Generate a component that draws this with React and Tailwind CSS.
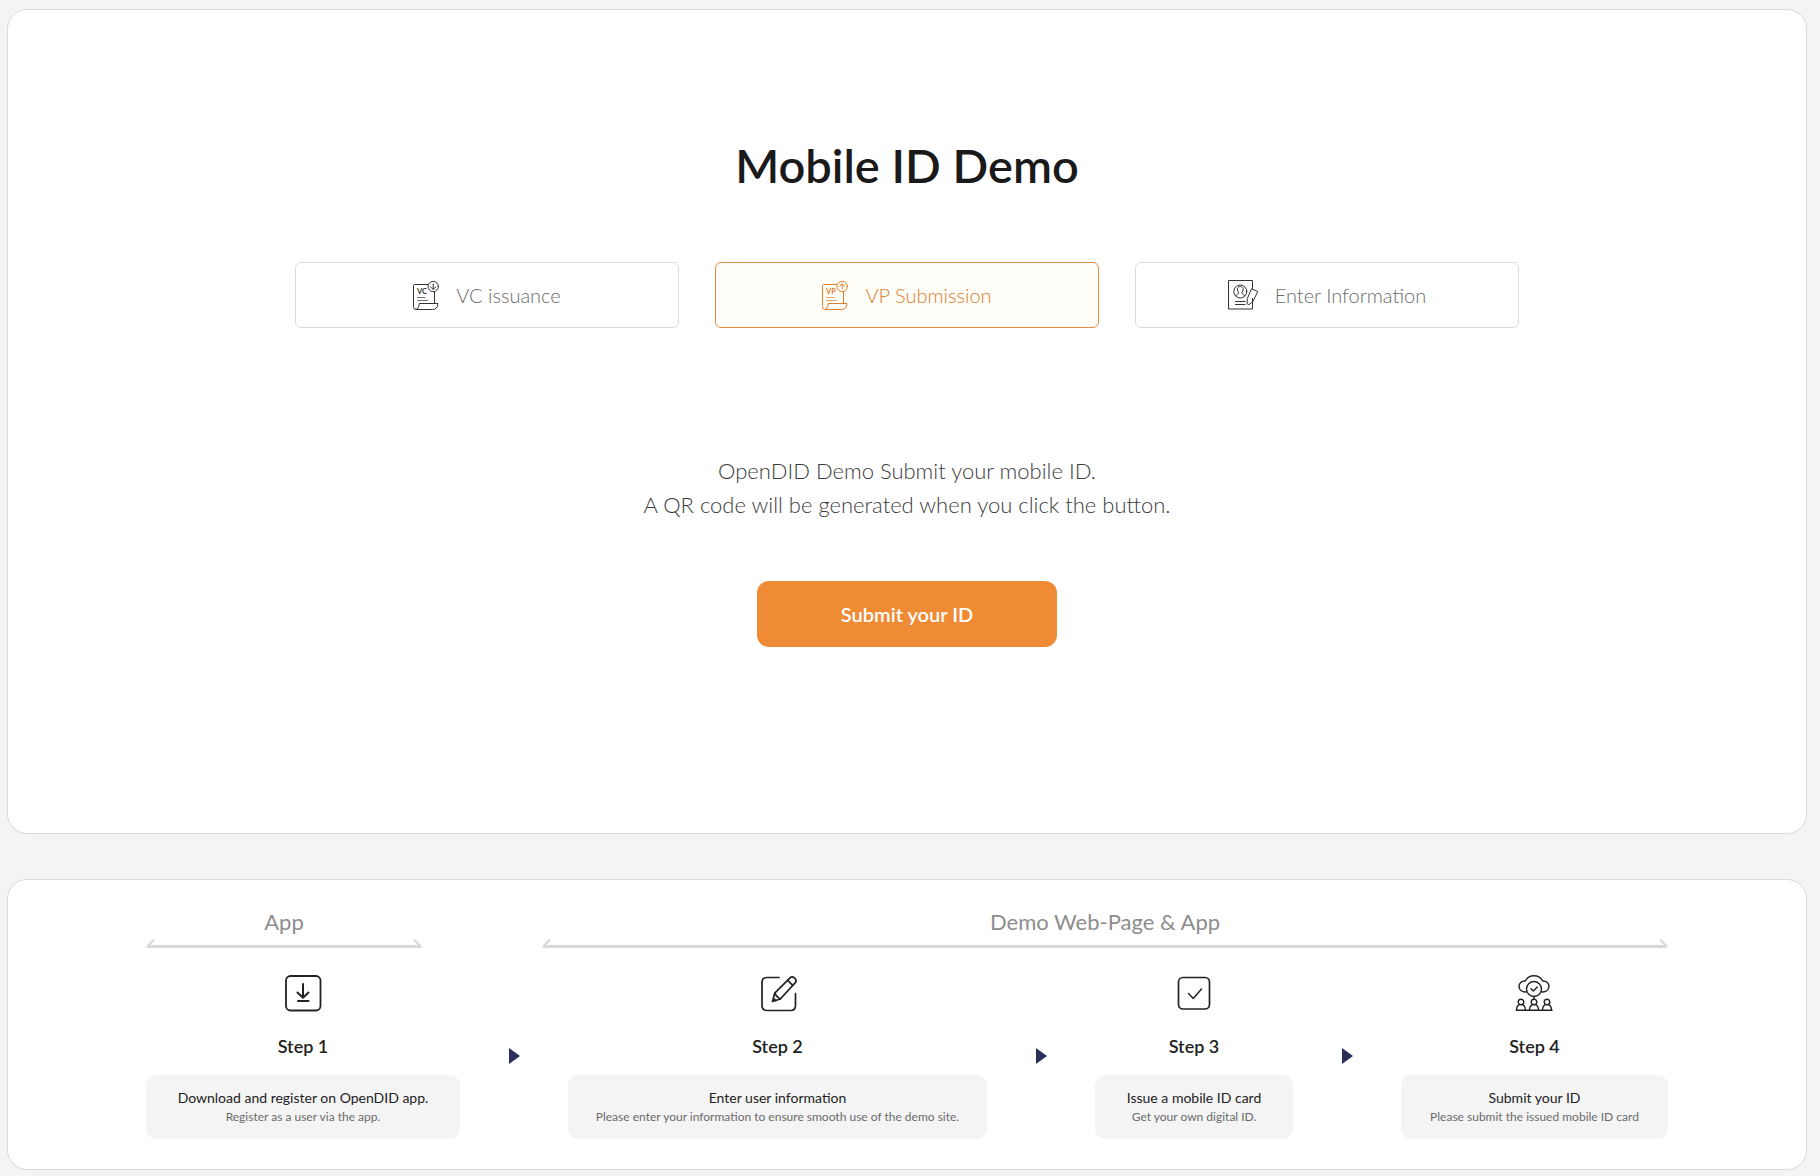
const iconProps = {
  fill: "none",
  stroke: "currentColor",
  strokeLinecap: "round",
  strokeLinejoin: "round",
  "aria-hidden": true,
};

function CertificateIcon({ letters, direction }) {
  return (
    <svg {...iconProps} viewBox="0 0 27 30" strokeWidth="1" className="h-[30px] w-[27px] shrink-0">
      <path d="M14.8 4.5H1.5q-1 0-1 1V26.5Q.5 29.5 3 29.5H19.5Q24.5 29.5 25 23.5H6.2Q6 29 3 29.5" />
      <path d="M21.5 11.8V23.3" />
      <circle cx="20.2" cy="6.5" r="5.2" />
      <path d={direction === "down" ? "M20.2 4v5.2M17.7 7l2.5 2.4L22.7 7" : "M20.2 9.2V4M17.7 6.300l2.5-2.4 2.5 2.4"} />
      <path d="M4.5 17.5h7.5M4.5 20.5h10" opacity="0.7" />
      <text x="4" y="14.2" fontSize="7.5" fontWeight="700" fill="currentColor" stroke="none" fontFamily="Lato, sans-serif">
        {letters}
      </text>
    </svg>
  );
}

function ProfileFormIcon() {
  return (
    <svg {...iconProps} viewBox="0 0 31 30" strokeWidth="1" className="h-[30px] w-[31px] shrink-0">
      <path d="M24.5 8.5V.5H.5v28.5h24V18.5" />
      <circle cx="12.3" cy="11.5" r="6.5" />
      <path d="M8 16c.5-1.500 1.500-2 2.400-2.300.6-.3.5-1-.1-1.800-1.600-2.400-.8-5.400 2-5.400s3.600 3 2 5.400c-.6.8-.7 1.500-.1 1.800.9.3 1.900.8 2.400 2.300" />
      <path d="M7.500 21.500h9.500M7.500 24.500h9.500" />
      <path d="M23.800 9l6 2.500-5 10.200-4 3-1.800-1 .3-4.700z" />
    </svg>
  );
}

const stepSvg = { ...iconProps, viewBox: "0 0 40 40", className: "size-10" };

function DownloadIcon() {
  return (
    <svg {...stepSvg} strokeWidth="1.8">
      <rect x="3" y="3" width="34.5" height="34.5" rx="4.5" />
      <path d="M20 11v13.500M14.500 19.500l5.500 5.300 5.500-5.300M15 28h10.500" strokeWidth="2" />
    </svg>
  );
}

function EditIcon() {
  return (
    <svg {...stepSvg} strokeWidth="1.7">
      <path d="M21 4.500H9q-5 0-5 5V32.500q0 5 5 5H32.500q5 0 5-5V20.500" />
      <path d="M14.500 28.500l2.200-8.300L32 4.800q2.200-2 4.700.3t.4 4.800L22.300 26z" />
      <path d="M29.700 7.300l5 5M16.700 20.200q1.500 3.500 5.600 5.800M16.200 26.200l1.600 1.300" />
    </svg>
  );
}

function CheckBoxIcon() {
  return (
    <svg {...stepSvg} strokeWidth="1.7">
      <rect x="4.5" y="4.5" width="31" height="31.5" rx="4.5" />
      <path d="M14.500 20.500l4.800 5L27.500 16" strokeWidth="1.5" />
    </svg>
  );
}

function CommunityIcon() {
  return (
    <svg {...stepSvg} viewBox="1 0 40 40" strokeWidth="1.4">
      <path d="M12.500 18.800C8.500 19.500 5 17 5 13.500 5 10 8 7.600 11.300 8 13 4.500 16 2.800 20 2.800S27 4.500 28.700 8C32 7.600 35 10 35 13.500c0 3.500-3.500 6-7.500 5.300" />
      <circle cx="20" cy="16" r="7.5" />
      <path d="M17 15.800l2.300 2.300 4-4M20 23.500v2.500" />
      <path d="M2.500 37.300h35.500" />
      {[7, 20, 33].map((x) => (
        <g key={x} transform={`translate(${x} 0)`}>
          <circle cx="0" cy="29" r="2.8" />
          <path d="M-4.500 37.300q0-4.500 3-5.600M4.500 37.300q0-4.500-3-5.600" />
        </g>
      ))}
    </svg>
  );
}

function BracketEnd({ flipped }) {
  return (
    <svg viewBox="0 0 9 9" aria-hidden="true" className={flipped ? "size-[9px] -scale-x-100" : "size-[9px]"}>
      <path d="M7.300 1.200L2 6.800" stroke="#d9d9dd" strokeWidth="2.4" strokeLinecap="round" />
      <path d="M2.500 6H9v3H1.200Q-.3 9 .5 7.800z" fill="#d9d9dd" />
    </svg>
  );
}

function Bracket({ label }) {
  return (
    <div className="flex flex-col items-center">
      <h2 className="text-[22px] leading-[30px] text-[#8d8d8d]">{label}</h2>
      <div className="mt-[2px] flex w-full items-end">
        <BracketEnd />
        <div className="h-[3px] flex-1 bg-[#d9d9dd]" />
        <BracketEnd flipped />
      </div>
    </div>
  );
}

function Arrow() {
  return (
    <div className="flex justify-center pt-[75px]">
      <svg viewBox="0 0 11 16" aria-hidden="true" className="h-4 w-[11px]">
        <path d="M0 0L11 8L0 16z" fill="#2e2e5c" />
      </svg>
    </div>
  );
}

function Step({ icon, name, title, note }) {
  return (
    <li className="flex flex-col items-center text-center">
      {icon}
      <h3 className="mt-[19px] text-lg leading-7 font-semibold">{name}</h3>
      <div className="mt-[15px] w-full rounded-[10px] bg-[#f4f4f4] py-[13px] whitespace-nowrap">
        <p className="text-sm leading-5">{title}</p>
        <p className="text-xs leading-[18px] text-[#6b6b6b]">{note}</p>
      </div>
    </li>
  );
}

const tabs = [
  { label: "VC issuance", icon: <CertificateIcon letters="VC" direction="down" /> },
  { label: "VP Submission", icon: <CertificateIcon letters="VP" direction="up" />, active: true },
  { label: "Enter Information", icon: <ProfileFormIcon /> },
];

export default function App() {
  return (
    <div className="flex min-h-screen flex-col gap-[45px] bg-[#f4f4f6] pt-[9px] pr-[13px] pb-[6px] pl-[7px] font-['Lato',sans-serif] text-[#222]">
      <main className="flex flex-col items-center rounded-[20px] border border-[#d9d9dc] bg-white px-8 pt-[125px] pb-[186px]">
        <h1 className="text-[47px] leading-[60px] font-semibold text-[#1a1a1a]">Mobile ID Demo</h1>

        <div role="tablist" className="mt-[67px] grid w-full max-w-[1224px] grid-cols-3 gap-9">
          {tabs.map((tab) => (
            <button
              key={tab.label}
              type="button"
              role="tab"
              aria-selected={Boolean(tab.active)}
              className={
                tab.active
                  ? "flex h-[66px] items-center justify-center gap-4 rounded-md border border-[#e08d43] bg-[#fffdf8] text-xl font-light text-[#dc8030]"
                  : "flex h-[66px] items-center justify-center gap-4 rounded-md border border-[#dcdcdf] bg-white text-xl font-light text-[#333]"
              }
            >
              {tab.icon}
              <span className={tab.active ? "" : "text-[#6c6c6c]"}>{tab.label}</span>
            </button>
          ))}
        </div>

        <p className="mt-[126px] text-center text-[22px] leading-[34px] font-light text-[#3c3c3c]">
          OpenDID Demo Submit your mobile ID.
          <br />A QR code will be generated when you click the button.
        </p>

        <button type="button" className="mt-[59px] h-[66px] w-[300px] rounded-xl bg-[#ef8b35] text-xl font-semibold text-white">
          Submit your ID
        </button>
      </main>

      <section aria-label="Demo steps" className="rounded-[20px] border border-[#d9d9dc] bg-white px-[138px] pt-[27px] pb-[30px]">
        <div className="grid grid-cols-[276fr_1126fr] gap-[120px]">
          <Bracket label="App" />
          <Bracket label="Demo Web-Page & App" />
        </div>
        <ol className="mt-[25px] grid grid-cols-[314fr_108fr_419fr_108fr_198fr_108fr_267fr]">
          <Step icon={<DownloadIcon />} name="Step 1" title="Download and register on OpenDID app." note="Register as a user via the app." />
          <Arrow />
          <Step icon={<EditIcon />} name="Step 2" title="Enter user information" note="Please enter your information to ensure smooth use of the demo site." />
          <Arrow />
          <Step icon={<CheckBoxIcon />} name="Step 3" title="Issue a mobile ID card" note="Get your own digital ID." />
          <Arrow />
          <Step icon={<CommunityIcon />} name="Step 4" title="Submit your ID" note="Please submit the issued mobile ID card" />
        </ol>
      </section>
    </div>
  );
}
